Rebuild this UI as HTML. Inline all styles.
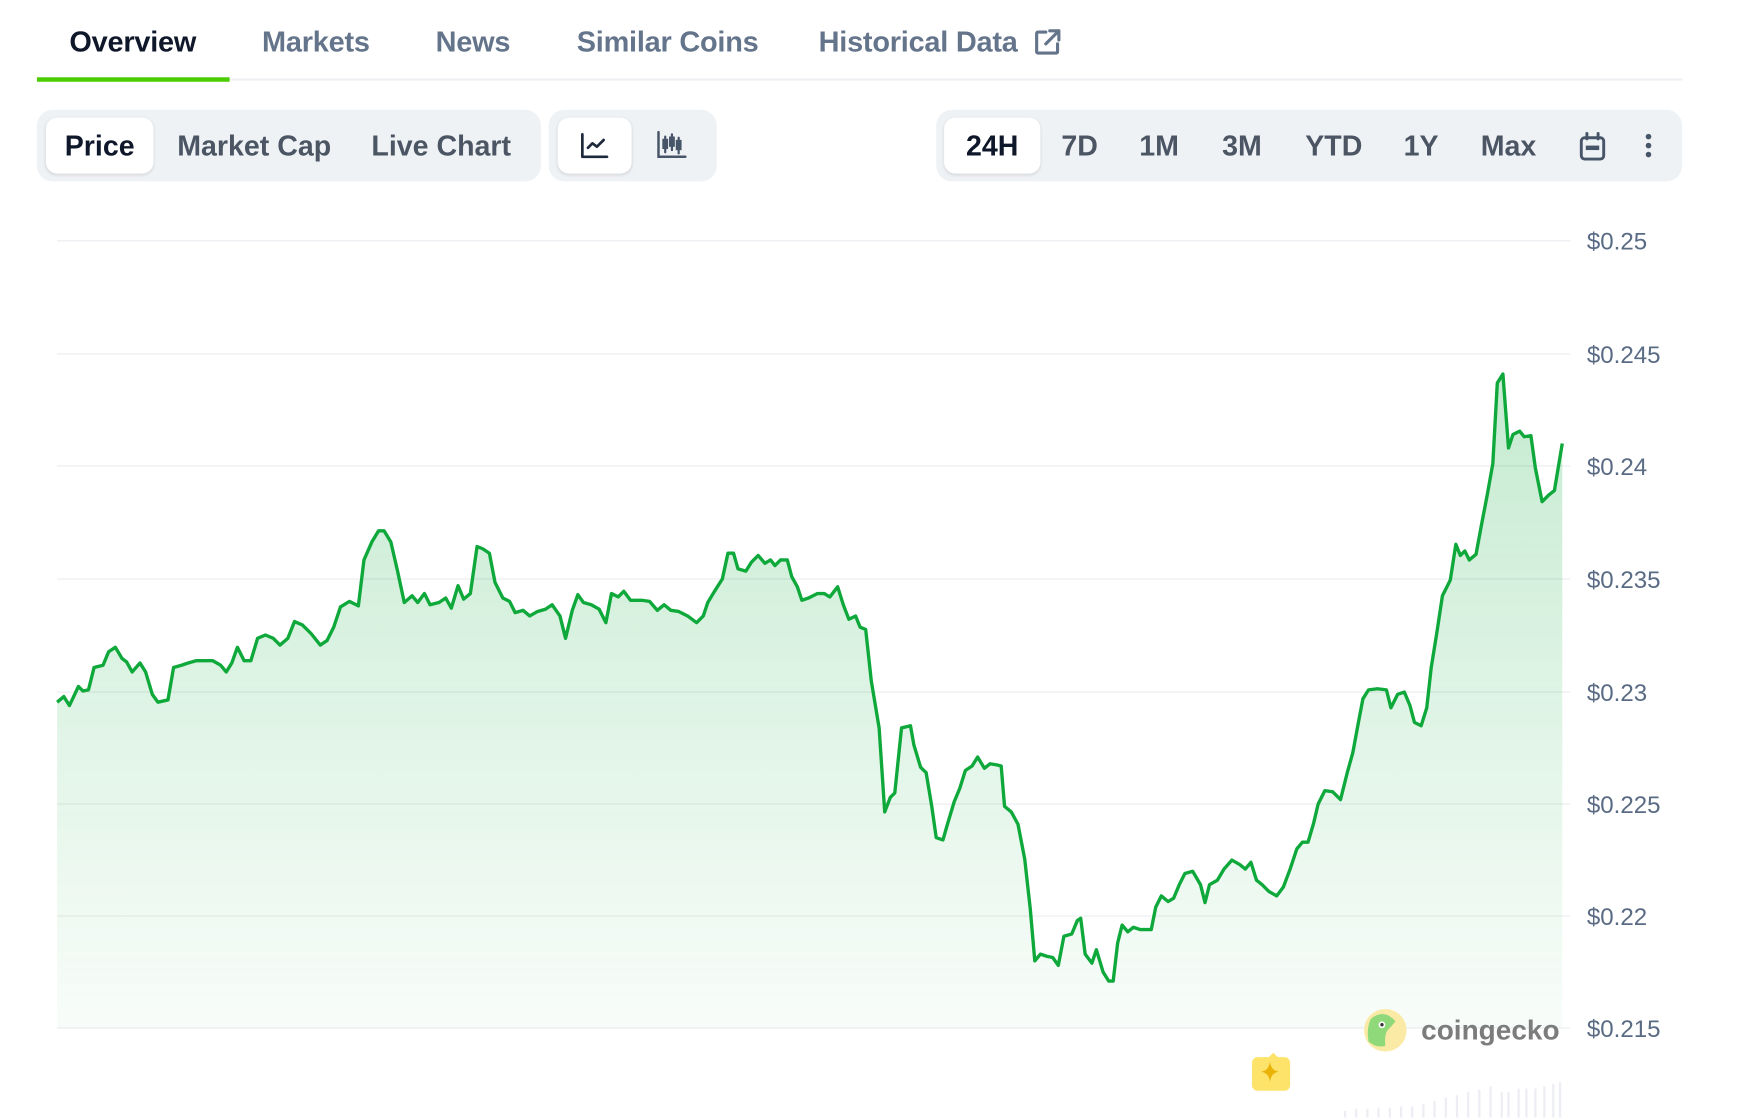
<!DOCTYPE html>
<html><head><meta charset="utf-8">
<style>
html,body{margin:0;padding:0;background:#fff;overflow:hidden;width:1756px;height:1118px}
#w{position:absolute;left:0;top:0;width:1568px;height:998px;transform:scale(1.1199);transform-origin:0 0;font-family:"Liberation Sans",sans-serif}
.tab{position:absolute;top:24px;font-size:25.8px;font-weight:600;color:#64748b;letter-spacing:-0.2px}
.grp{position:absolute;top:98px;height:64px;background:#eff2f5;border-radius:14px}
.btn{position:absolute;top:7px;height:50px;line-height:52px;font-size:25.5px;font-weight:600;color:#4b5563;text-align:center;border-radius:10px}
.on{background:#fff;color:#0f172a;box-shadow:0 1px 3px rgba(0,0,0,.12)}
.lbl{position:absolute;left:1417px;font-size:21.5px;color:#5a6b84}
</style></head><body><div id="w">
<div class="tab" style="left:62px;color:#0f172a">Overview</div>
<div class="tab" style="left:234px">Markets</div>
<div class="tab" style="left:389px">News</div>
<div class="tab" style="left:515px">Similar Coins</div>
<div class="tab" style="left:731px">Historical Data</div>
<svg style="position:absolute;left:921px;top:24px" width="28" height="28" viewBox="0 0 24 24" fill="none" stroke="#64748b" stroke-width="2.4" stroke-linecap="round" stroke-linejoin="round"><path d="M11 4H5a1 1 0 0 0-1 1v14a1 1 0 0 0 1 1h14a1 1 0 0 0 1-1v-6M14 3h7v7M21 3L11 13"/></svg>
<div style="position:absolute;left:33px;top:70px;width:1469px;height:2px;background:#eff0f4"></div>
<div style="position:absolute;left:33px;top:69px;width:172px;height:4px;background:#4bcc00"></div>

<div class="grp" style="left:33px;width:450px">
<div class="btn on" style="left:8px;width:96px">Price</div>
<div class="btn" style="left:116px;width:156px">Market Cap</div>
<div class="btn" style="left:290px;width:142px">Live Chart</div>
</div>
<div class="grp" style="left:490px;width:150px">
<div class="btn on" style="left:8px;width:66px"><svg style="margin-top:13px" width="26" height="24" viewBox="0 0 26 24" fill="none" stroke="#1e293b" stroke-width="2.4" stroke-linecap="round" stroke-linejoin="round"><path d="M2 2v20h22M7 14l4-4 4 3 6-6"/></svg></div>
<div style="position:absolute;left:96px;top:18px"><svg width="28" height="26" viewBox="0 0 28 26" fill="none" stroke="#475569" stroke-width="2.2" stroke-linecap="round"><path d="M2 2v22h24"/><path d="M8 6v14M14 4v14M20 7v14" stroke-width="2"/><rect x="6.5" y="9" width="3" height="7" fill="#475569"/><rect x="12.5" y="7" width="3" height="7" fill="#475569"/><rect x="18.5" y="10" width="3" height="7" fill="#475569"/></svg></div>
</div>
<div class="grp" style="left:836px;width:666px">
<div class="btn on" style="left:7px;width:86px;color:#0f172a">24H</div>
<div class="btn" style="left:100px;width:56px">7D</div>
<div class="btn" style="left:170px;width:58px">1M</div>
<div class="btn" style="left:242px;width:62px">3M</div>
<div class="btn" style="left:320px;width:70px">YTD</div>
<div class="btn" style="left:408px;width:50px">1Y</div>
<div class="btn" style="left:474px;width:74px">Max</div>
<svg style="position:absolute;left:574px;top:20px" width="24" height="26" viewBox="0 0 24 26" fill="none" stroke="#475569" stroke-width="2.6"><rect x="2" y="5" width="20" height="19" rx="3"/><path d="M7 1v5M17 1v5" stroke-linecap="round"/><rect x="6" y="12" width="12" height="4" fill="#475569" stroke="none"/></svg>
<svg style="position:absolute;left:632px;top:20px" width="8" height="24"><circle cx="4" cy="4" r="2.5" fill="#475569"/><circle cx="4" cy="12" r="2.5" fill="#475569"/><circle cx="4" cy="20" r="2.5" fill="#475569"/></svg>
</div>

<svg style="position:absolute;left:0;top:0" width="1568" height="998">
<defs><linearGradient id="g" gradientUnits="userSpaceOnUse" x1="0" y1="330" x2="0" y2="918"><stop offset="0" stop-color="#1fb04a" stop-opacity=".26"/><stop offset="1" stop-color="#1fb04a" stop-opacity=".03"/></linearGradient></defs>
<g stroke="#eef0f3" stroke-width="1.3">
<line x1="51" y1="215" x2="1402" y2="215"/><line x1="51" y1="316" x2="1402" y2="316"/><line x1="51" y1="416" x2="1402" y2="416"/><line x1="51" y1="517" x2="1402" y2="517"/><line x1="51" y1="618" x2="1402" y2="618"/><line x1="51" y1="718" x2="1402" y2="718"/><line x1="51" y1="818" x2="1402" y2="818"/><line x1="51" y1="918" x2="1402" y2="918"/>
</g>
<path fill="url(#g)" d="M51,627 L57,622 62,630 70,613 74,617 79,616 84,596 92,594 97,582 103,578 109,588 113,591 118,600 125,592 130,600 136,620 141,627 150,625 155,596 162,594 168,592 175,590 182,590 190,590 197,594 202,600 207,592 212,578 218,590 224,590 230,570 237,567 244,570 250,576 257,570 263,555 270,558 278,566 286,576 292,572 298,560 304,542 312,537 320,541 325,500 332,484 338,474 343,474 349,484 355,510 361,538 368,532 373,538 379,530 384,540 392,538 398,534 403,543 409,523 414,535 420,530 426,488 431,490 437,494 442,520 449,534 455,537 460,547 467,545 473,550 480,546 487,544 493,540 500,550 505,570 511,545 516,531 521,538 528,540 535,544 541,556 546,530 552,533 557,528 563,536 573,536 580,537 587,545 593,540 599,545 606,546 614,550 622,556 628,550 632,538 638,528 645,517 650,494 655,494 659,508 666,510 671,502 677,496 683,503 688,500 692,505 697,500 703,500 707,515 712,524 716,536 722,534 730,530 736,530 741,533 748,524 753,540 758,553 764,550 768,560 773,562 778,608 785,650 790,725 795,712 799,708 805,650 813,648 816,665 822,685 827,690 832,720 836,748 842,750 846,736 852,716 857,704 862,688 868,684 873,676 879,686 884,682 890,683 894,684 897,720 903,725 909,736 915,767 920,812 924,858 929,852 935,854 940,855 945,862 950,836 957,834 962,822 965,820 969,852 975,860 979,848 985,868 990,876 994,876 998,842 1002,826 1007,832 1012,828 1018,830 1028,830 1032,810 1037,800 1043,805 1048,802 1053,790 1058,780 1065,778 1072,790 1076,806 1080,790 1087,786 1093,776 1100,768 1107,772 1112,776 1117,770 1122,786 1127,790 1133,796 1140,800 1146,792 1152,776 1158,758 1163,752 1168,752 1173,735 1177,718 1183,706 1190,707 1197,714 1203,690 1208,672 1213,645 1217,624 1222,616 1230,615 1238,616 1242,632 1248,620 1254,618 1259,630 1263,645 1269,648 1274,632 1278,596 1283,565 1288,532 1295,518 1300,486 1304,496 1308,492 1312,500 1318,495 1323,468 1328,442 1333,414 1337,342 1342,334 1347,400 1351,388 1357,385 1361,390 1367,389 1371,418 1377,448 1383,442 1388,438 1395,396 L1395,918 L51,918Z"/>
<polyline fill="none" stroke="#0ea83b" stroke-width="3" stroke-linejoin="round" points="51,627 57,622 62,630 70,613 74,617 79,616 84,596 92,594 97,582 103,578 109,588 113,591 118,600 125,592 130,600 136,620 141,627 150,625 155,596 162,594 168,592 175,590 182,590 190,590 197,594 202,600 207,592 212,578 218,590 224,590 230,570 237,567 244,570 250,576 257,570 263,555 270,558 278,566 286,576 292,572 298,560 304,542 312,537 320,541 325,500 332,484 338,474 343,474 349,484 355,510 361,538 368,532 373,538 379,530 384,540 392,538 398,534 403,543 409,523 414,535 420,530 426,488 431,490 437,494 442,520 449,534 455,537 460,547 467,545 473,550 480,546 487,544 493,540 500,550 505,570 511,545 516,531 521,538 528,540 535,544 541,556 546,530 552,533 557,528 563,536 573,536 580,537 587,545 593,540 599,545 606,546 614,550 622,556 628,550 632,538 638,528 645,517 650,494 655,494 659,508 666,510 671,502 677,496 683,503 688,500 692,505 697,500 703,500 707,515 712,524 716,536 722,534 730,530 736,530 741,533 748,524 753,540 758,553 764,550 768,560 773,562 778,608 785,650 790,725 795,712 799,708 805,650 813,648 816,665 822,685 827,690 832,720 836,748 842,750 846,736 852,716 857,704 862,688 868,684 873,676 879,686 884,682 890,683 894,684 897,720 903,725 909,736 915,767 920,812 924,858 929,852 935,854 940,855 945,862 950,836 957,834 962,822 965,820 969,852 975,860 979,848 985,868 990,876 994,876 998,842 1002,826 1007,832 1012,828 1018,830 1028,830 1032,810 1037,800 1043,805 1048,802 1053,790 1058,780 1065,778 1072,790 1076,806 1080,790 1087,786 1093,776 1100,768 1107,772 1112,776 1117,770 1122,786 1127,790 1133,796 1140,800 1146,792 1152,776 1158,758 1163,752 1168,752 1173,735 1177,718 1183,706 1190,707 1197,714 1203,690 1208,672 1213,645 1217,624 1222,616 1230,615 1238,616 1242,632 1248,620 1254,618 1259,630 1263,645 1269,648 1274,632 1278,596 1283,565 1288,532 1295,518 1300,486 1304,496 1308,492 1312,500 1318,495 1323,468 1328,442 1333,414 1337,342 1342,334 1347,400 1351,388 1357,385 1361,390 1367,389 1371,418 1377,448 1383,442 1388,438 1395,396"/>
<g fill="#eceef3">
<rect x="1200" y="992" width="2" height="6"/><rect x="1210" y="990" width="2" height="8"/><rect x="1220" y="990" width="2" height="8"/><rect x="1230" y="989" width="2" height="9"/><rect x="1240" y="989" width="2" height="9"/><rect x="1250" y="988" width="2" height="10"/><rect x="1260" y="988" width="2" height="10"/><rect x="1270" y="986" width="2" height="12"/><rect x="1280" y="983" width="2" height="15"/><rect x="1290" y="980" width="2" height="18"/><rect x="1300" y="978" width="2" height="20"/><rect x="1310" y="975" width="2" height="23"/><rect x="1320" y="973" width="2" height="25"/><rect x="1330" y="970" width="2" height="28"/><rect x="1340" y="975" width="2" height="23"/><rect x="1346" y="975" width="2" height="23"/><rect x="1355" y="972" width="2" height="26"/><rect x="1362" y="972" width="2" height="26"/><rect x="1370" y="972" width="2" height="26"/><rect x="1378" y="970" width="2" height="28"/><rect x="1386" y="968" width="2" height="30"/><rect x="1392" y="966" width="2" height="32"/>
</g>
<g transform="translate(1117,940)"><path d="M6 4h10l4-4 4 4h6a5 5 0 0 1 5 5v20a5 5 0 0 1-5 5H6a5 5 0 0 1-5-5V9a5 5 0 0 1 5-5z" fill="#fde36a"/><path d="M17 8q1 8 8 9q-7 1-8 9q-1-8-8-9q7-1 8-9z" fill="#eab308"/></g>
<circle cx="1237" cy="920" r="19" fill="#fbeaa5"/>
<path d="M1222 930q-2-12 2-20q6-6 14-4q5 2 8 6q-4 5-7 8q-3 4-2 14q-8 2-15-4z" fill="#8fd97a"/>
<circle cx="1234" cy="915" r="3" fill="#fff"/><circle cx="1234" cy="915" r="1.5" fill="#333"/>
<text x="1269" y="928" font-family="Liberation Sans,sans-serif" font-weight="700" font-size="25" fill="#7c7c7c">coingecko</text>
</svg>
<div class="lbl" style="top:204px">$0.25</div>
<div class="lbl" style="top:305px">$0.245</div>
<div class="lbl" style="top:405px">$0.24</div>
<div class="lbl" style="top:506px">$0.235</div>
<div class="lbl" style="top:607px">$0.23</div>
<div class="lbl" style="top:707px">$0.225</div>
<div class="lbl" style="top:807px">$0.22</div>
<div class="lbl" style="top:907px">$0.215</div>
</div></body></html>
